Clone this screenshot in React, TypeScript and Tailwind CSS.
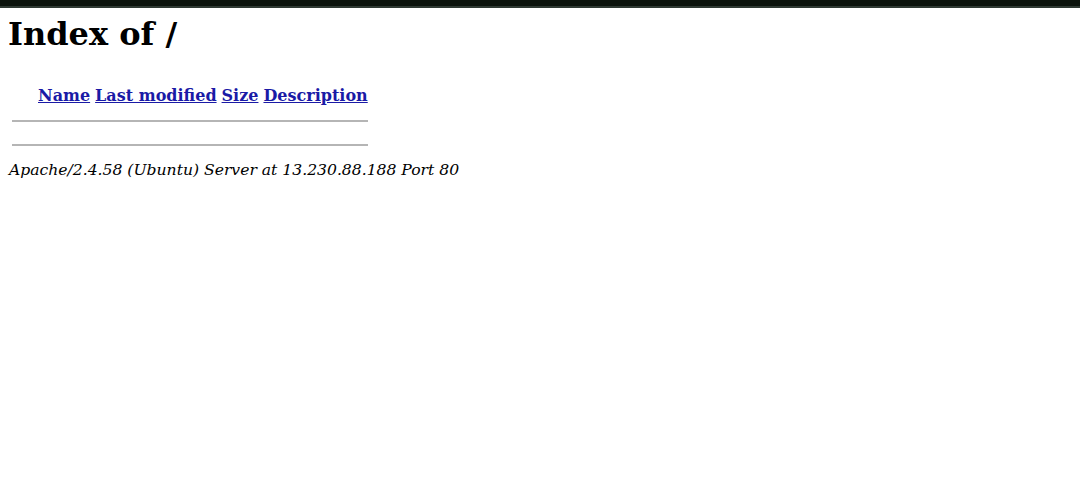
export default function App() {
  const serif = { fontFamily: '"DejaVu Serif", "Liberation Serif", serif' };
  const link = "text-[#1a1aa6] underline";
  return (
    <div className="min-h-[497px] bg-white text-black" style={serif}>
      <div className="h-[6px] bg-[#0b130c]" />
      <div className="h-[2px] bg-[#2f3a33]" />
      <div className="pl-[7px]">
        <h1 className="ml-[1px] mt-[6px] text-[32px] font-bold leading-[40px]">Index of /</h1>
        <table className="mt-[31px] border-separate border-spacing-x-[5px] border-spacing-y-0 text-[16px] leading-[22px]">
          <tbody>
            <tr>
              <th className="w-[21px] p-0" />
              <th className="p-0 font-bold">
                <a href="#" className={link}>Name</a>
              </th>
              <th className="p-0 font-bold">
                <a href="#" className={link}>Last modified</a>
              </th>
              <th className="p-0 font-bold">
                <a href="#" className={link}>Size</a>
              </th>
              <th className="p-0 font-bold">
                <a href="#" className={link}>Description</a>
              </th>
            </tr>
            <tr>
              <th colSpan={5} className="h-[16px] p-0 align-bottom">
                <hr className="mb-[1px] border-t-2 border-[#b5b5b5]" />
              </th>
            </tr>
            <tr>
              <th colSpan={5} className="h-[24px] p-0 align-bottom">
                <hr className="mb-[1px] border-t-2 border-[#b5b5b5]" />
              </th>
            </tr>
          </tbody>
        </table>
        <address className="ml-[2px] mt-[12px] text-[15.6px] italic leading-[22px]">
          Apache/2.4.58 (Ubuntu) Server at 13.230.88.188 Port 80
        </address>
      </div>
    </div>
  );
}
